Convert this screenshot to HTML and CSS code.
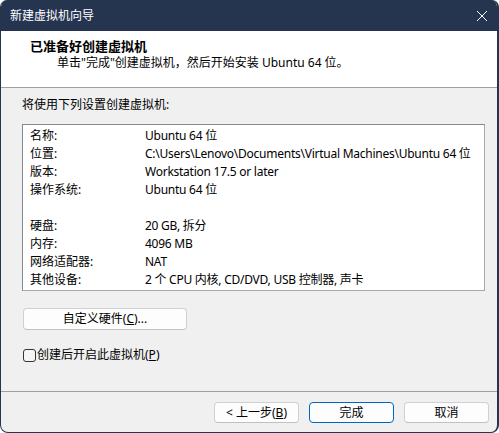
FILE: index.html
```html
<!DOCTYPE html>
<html lang="zh-CN">
<head>
<meta charset="utf-8">
<title>新建虚拟机向导</title>
<link rel="stylesheet" href="styles.css">
</head>
<body>
<div class="window">
  <div class="titlebar">
    <span class="title">新建虚拟机向导</span>
    <svg class="close" width="12" height="12" viewBox="0 0 12 12"><path d="M1 1 L11 11 M11 1 L1 11" stroke="#fff" stroke-width="1" fill="none"/></svg>
  </div>
  <div class="header">
    <div class="heading">已准备好创建虚拟机</div>
    <div class="subtitle">单击"完成"创建虚拟机，然后开始安装 Ubuntu 64 位。</div>
  </div>
  <div class="main">
    <div class="intro">将使用下列设置创建虚拟机:</div>
    <div class="summary">
      <div class="row"><span class="label">名称:</span><span class="value">Ubuntu 64 位</span></div>
      <div class="row"><span class="label">位置:</span><span class="value">C:\Users\Lenovo\Documents\Virtual Machines\Ubuntu 64 位</span></div>
      <div class="row"><span class="label">版本:</span><span class="value">Workstation 17.5 or later</span></div>
      <div class="row"><span class="label">操作系统:</span><span class="value">Ubuntu 64 位</span></div>
      <div class="row"></div>
      <div class="row"><span class="label">硬盘:</span><span class="value">20 GB, 拆分</span></div>
      <div class="row"><span class="label">内存:</span><span class="value">4096 MB</span></div>
      <div class="row"><span class="label">网络适配器:</span><span class="value">NAT</span></div>
      <div class="row"><span class="label">其他设备:</span><span class="value">2 个 CPU 内核, CD/DVD, USB 控制器, 声卡</span></div>
    </div>
    <button class="btn btn-custom">自定义硬件(<u>C</u>)...</button>
    <label class="check"><span class="box"></span><span>创建后开启此虚拟机(<u>P</u>)</span></label>
  </div>
  <div class="footer">
    <button class="btn btn-foot">&lt; 上一步(<u>B</u>)</button>
    <button class="btn btn-foot btn-default">完成</button>
    <button class="btn btn-foot">取消</button>
  </div>
</div>
</body>
</html>
```

FILE: styles.css
```css
* { box-sizing: border-box; }
html, body { margin: 0; padding: 0; background: #ffffff; }
body {
  font-family: "Noto Sans", "Noto Sans CJK SC", sans-serif;
  font-size: 12px;
  color: #000;
}
.window {
  width: 499px;
  height: 433px;
  display: flex;
  flex-direction: column;
  background: #f0f0f0;
  border: 1px solid #25344f;
  border-top: none;
  border-right-width: 2px;
  border-radius: 7px 7px 8px 8px;
  overflow: hidden;
}
.titlebar {
  height: 31px;
  flex: none;
  background: #25344f;
  color: #fff;
  display: flex;
  align-items: center;
  justify-content: space-between;
  padding: 0 9px 0 9px;
}
.title { line-height: 16px; }
.header {
  height: 57px;
  flex: none;
  background: #fff;
  border-bottom: 1px solid #a0a0a0;
  padding: 6px 0 0 29px;
}
.heading {
  font-weight: bold;
  font-size: 13px;
  line-height: 18px;
}
.subtitle {
  padding-left: 27px;
  line-height: 16px;
}
.main {
  flex: 1;
  display: flex;
  flex-direction: column;
  align-items: flex-start;
  padding: 8px 0 0 21px;
}
.intro { line-height: 18px; }
.summary {
  margin-top: 10px;
  width: 463px;
  background: #fff;
  border: 1px solid #828790;
  border-right-color: #a8a8a8;
  border-bottom-color: #a8a8a8;
  padding: 2px 0 1px 7px;
}
.row {
  height: 18px;
  line-height: 18px;
  display: flex;
  white-space: nowrap;
}
.label { width: 115px; flex: none; }
.value { letter-spacing: -0.25px; }
.btn {
  font-family: inherit;
  font-size: 12px;
  color: #000;
  background: #fdfdfd;
  border: 1px solid #d0d0d0;
  border-bottom-color: #c0c0c0;
  border-radius: 4px;
  padding: 0;
  line-height: 18px;
}
.btn u { text-decoration: underline; }
.btn-custom {
  margin-top: 17px;
  margin-left: 1px;
  width: 164px;
  height: 22px;
}
.check {
  margin-top: 17px;
  display: flex;
  align-items: center;
  height: 16px;
  line-height: 16px;
}
.box {
  width: 13px;
  height: 13px;
  border: 1px solid #333;
  border-radius: 3px;
  background: #f5f5f5;
  margin-right: 1px;
  margin-left: 1px;
}
.footer {
  flex: none;
  height: 41px;
  border-top: 1px solid #a0a0a0;
  display: flex;
  justify-content: flex-end;
  gap: 10px;
  padding: 10px 8px 0 0;
}
.btn-foot {
  width: 85px;
  height: 21px;
}
.btn-default {
  border: 1px solid #0067c0;
}
```
